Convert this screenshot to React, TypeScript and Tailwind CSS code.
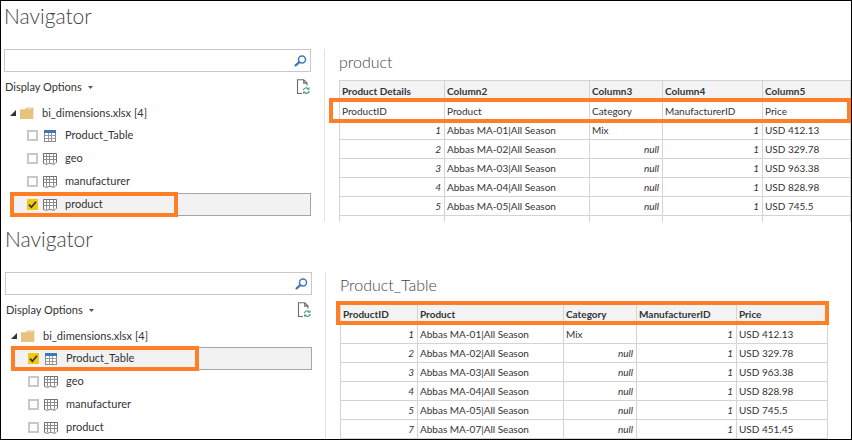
import React, { useState } from "react";
import { clsx } from "clsx";

type Item = { name: string; kind: "table" | "sheet" };

const items: Item[] = [
  { name: "Product_Table", kind: "table" },
  { name: "geo", kind: "sheet" },
  { name: "manufacturer", kind: "sheet" },
  { name: "product", kind: "sheet" },
];

const rows = [
  ["1", "Abbas MA-01|All Season", "Mix", "1", "USD 412.13"],
  ["2", "Abbas MA-02|All Season", "null", "1", "USD 329.78"],
  ["3", "Abbas MA-03|All Season", "null", "1", "USD 963.38"],
  ["4", "Abbas MA-04|All Season", "null", "1", "USD 828.98"],
  ["5", "Abbas MA-05|All Season", "null", "1", "USD 745.5"],
  ["7", "Abbas MA-07|All Season", "null", "1", "USD 451.45"],
];

const fields = ["ProductID", "Product", "Category", "ManufacturerID", "Price"];

function SearchIcon() {
  return (
    <svg width="14" height="14" viewBox="0 0 14 14" fill="none" stroke="#3f78b8">
      <circle cx="9" cy="5.500" r="3.500" strokeWidth="1.5" />
      <path d="M6.300 8.200 2.600 11.400" strokeWidth="2.3" strokeLinecap="round" />
    </svg>
  );
}

function RefreshFileIcon() {
  return (
    <svg width="14" height="16" viewBox="0 0 14 16" fill="none">
      <path d="M6 14.500H1.500V.8h6.200l3.300 3.300v2.400M7.700.8v3.300h3.300" stroke="#6b6b6b" strokeWidth="1.1" />
      <path d="M7.300 11.200a3 3 0 0 1 5-1.500M13.300 12a3 3 0 0 1-5 1.500" stroke="#4d9c7c" strokeWidth="1.2" />
      <path d="M13.500 8v2.700h-2.700zM7.100 15.200v-2.700h2.700z" fill="#4d9c7c" />
    </svg>
  );
}

function FolderIcon() {
  return (
    <svg width="14" height="12" viewBox="0 0 14 12">
      <path d="M0 2.2h5L6.2.4H13.4V12H0z" fill="#e8c27f" />
      <path d="M6.6 1.6h5.8" stroke="#f5e2bd" strokeWidth="0.8" />
    </svg>
  );
}

function TableIcon() {
  return (
    <svg width="14" height="12" viewBox="0 0 14 12">
      <rect x="1.5" y=".5" width="11" height="11" fill="#fff" stroke="#8a8a8a" />
      <path d="M1.500 5.500h11M1.500 8.500h11M5.500 3v8.500M8.500 3v8.500" stroke="#9a9a9a" />
      <rect x="1" width="12" height="3" fill="#3a78bd" />
    </svg>
  );
}

function SheetIcon() {
  return (
    <svg width="14" height="12" viewBox="0 0 14 12" fill="none" stroke="#6e6e6e" strokeWidth="1">
      <path d="M.5 10.500V.5h13v8.800c-1.400.4-1.600 2-3.200 2-1.600 0-1.800-1.200-3.400-1.200-1.400 0-1.800 1.200-3.400 1.200C2 11.300 1.600 10.500.5 10.500z" fill="#fff" />
      <path d="M.5 3.500h13M.5 6.500h13M3.500.5v9.800M6.500.5v9.300M10.500.5v9.800" stroke="#8c8c8c" />
    </svg>
  );
}

function Tree({ initial, frame, id }: { initial: string; frame: string; id: string }) {
  const [selected, setSelected] = useState(initial);
  return (
    <div className="text-[11px] text-[#333]">
      <div className="flex h-[22px] items-center pl-[6px]">
        <button type="button" aria-label="Collapse" className="w-[10px]">
          <svg width="6" height="6" viewBox="0 0 6 6">
            <path d="M6 0v6H0z" fill="#333" />
          </svg>
        </button>
        <FolderIcon />
        <span className="ml-2">bi_dimensions.xlsx [4]</span>
      </div>
      <ul className="pl-[6px]">
        {items.map((item) => {
          const on = item.name === selected;
          return (
            <li key={item.name} className={clsx("relative h-[23px]", on && "bg-[#f2f2f2] outline outline-1 -outline-offset-1 outline-[#a6a6a6]")}>
              <label htmlFor={id + item.name} className="flex h-full items-center pl-[17px]">
                <span className="relative flex">
                  <input
                    id={id + item.name}
                    type="checkbox"
                    checked={on}
                    onChange={() => setSelected(item.name)}
                    className="size-[11px] appearance-none border-2 border-[#c8c8c8] bg-white checked:border-[#f2c811] checked:bg-[#f2c811]"
                  />
                  {on && (
                    <svg className="absolute inset-0" width="11" height="11" viewBox="0 0 11 11" fill="none">
                      <path d="M2 5.600 4.400 8.200 9 2.800" stroke="#333" strokeWidth="1.700" />
                    </svg>
                  )}
                </span>
                <span className="mr-2 ml-[5px]">{item.kind === "table" ? <TableIcon /> : <SheetIcon />}</span>
                {item.name}
              </label>
              {on && <div className={clsx("pointer-events-none absolute -top-px left-0 h-[25px] border-4 border-[#ff7f27]", frame)} />}
            </li>
          );
        })}
      </ul>
    </div>
  );
}

function Cell({ value }: { value: string }) {
  const right = value === "null" || /^\d+$/.test(value);
  return (
    <td className={clsx("border-r border-b border-[#d4d4d4] py-0", right ? "pr-[3px] text-right italic" : "pl-[2px]")}>
      {value}
    </td>
  );
}

function DataTable({ label, columns, widths, data, clipped }: { label: string; columns: string[]; widths: string[]; data: string[][]; clipped?: boolean }) {
  return (
    <table aria-label={label} className="w-full table-fixed border-separate border-spacing-0 border-t border-l border-[#d4d4d4] text-[10px] leading-[14px] whitespace-nowrap text-[#333]">
      <colgroup>
        {widths.map((w, i) => (
          <col key={i} className={w} />
        ))}
      </colgroup>
      <thead>
        <tr className="h-[21px] bg-[#f3f3f3]">
          {columns.map((c) => (
            <th key={c} className="border-r border-b border-[#d4d4d4] py-0 pl-[2px] text-left font-bold">
              {c}
            </th>
          ))}
        </tr>
      </thead>
      <tbody>
        {data.map((r) => (
          <tr key={r[0]} className="h-[19px]">
            {r.map((v, i) => (
              <Cell key={i} value={v} />
            ))}
          </tr>
        ))}
        {clipped && (
          <tr className="h-[6px]">
            {columns.map((c) => (
              <td key={c} className="border-r border-[#d4d4d4] p-0" />
            ))}
          </tr>
        )}
      </tbody>
    </table>
  );
}

function Navigator({ id, selected, frame, className, children }: { id: string; selected: string; frame: string; className: string; children: React.ReactNode }) {
  return (
    <section className={className}>
      <h1 className="h-12 text-[21px] leading-[30px] font-light text-[#444]">Navigator</h1>
      <div className="flex">
        <div className="w-[321px] shrink-0 border-r border-[#e3e3e3] pr-[13px]">
          <div className="flex h-[23px] items-center border border-[#c8c8c8] pr-[3px]">
            <input type="text" aria-label="Search" className="h-full min-w-0 flex-1 px-1 text-[11px] outline-none" />
            <button type="button" aria-label="Search">
              <SearchIcon />
            </button>
          </div>
          <div className="flex h-[30px] items-center justify-between pr-px pl-px">
            <button type="button" className="flex items-center gap-[6px] text-[11px] text-[#333]">
              Display Options
              <svg width="5" height="3" viewBox="0 0 5 3">
                <path d="M0 0h5L2.500 3z" fill="#555" />
              </svg>
            </button>
            <button type="button" aria-label="Refresh">
              <RefreshFileIcon />
            </button>
          </div>
          <Tree initial={selected} frame={frame} id={id} />
        </div>
        <div className="min-w-0 flex-1 pl-[14px]">
          <h2 className="h-[31px] text-[16px] leading-[26px] font-light text-[#444]">{selected}</h2>
          {children}
        </div>
      </div>
    </section>
  );
}

export default function App() {
  return (
    <main className="min-h-screen border border-black bg-white font-['Lato','Open_Sans',sans-serif]">
      <Navigator id="a-" selected="product" frame="w-[168px]" className="pl-[3px]">
        <div className="relative">
          <DataTable
            label="product"
            columns={["Product Details", "Column2", "Column3", "Column4", "Column5"]}
            widths={["w-[105px]", "w-[145px]", "w-[73px]", "w-[100px]", "w-auto"]}
            data={[fields, ...rows.slice(0, 5)]}
            clipped
          />
          <div className="pointer-events-none absolute top-[18px] right-0 -left-[10px] h-[25px] border-4 border-[#ff7f27]" />
        </div>
      </Navigator>
      <Navigator id="b-" selected="Product_Table" frame="w-[188px]" className="pt-[2px] pl-1">
        <div className="relative w-[488px] max-w-full">
          <DataTable
            label="Product_Table"
            columns={fields}
            widths={["w-[77px]", "w-[146px]", "w-[73px]", "w-[100px]", "w-auto"]}
            data={rows}
          />
          <div className="pointer-events-none absolute -top-[2px] -right-px -left-1 h-6 border-4 border-[#ff7f27]" />
        </div>
      </Navigator>
    </main>
  );
}
